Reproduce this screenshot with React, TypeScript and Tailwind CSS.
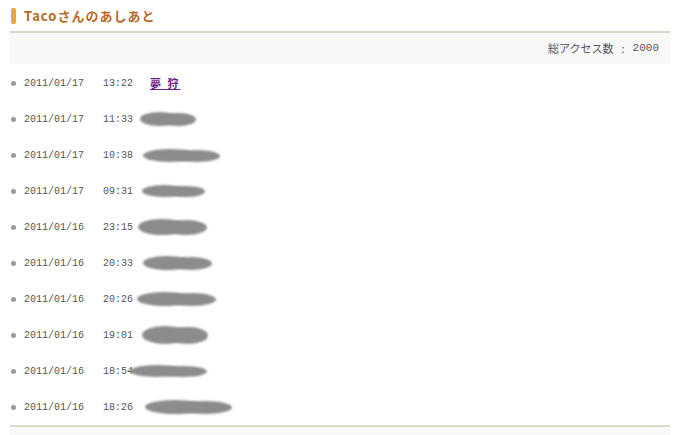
import React from "react";

const rows = [
  { date: "2011/01/17", time: "13:22", name: "夢 狩" },
  { date: "2011/01/17", time: "11:33", blob: { ml: -10, w: 56, h: 14 } },
  { date: "2011/01/17", time: "10:38", blob: { ml: -7, w: 77, h: 13 } },
  { date: "2011/01/17", time: "09:31", blob: { ml: -8, w: 63, h: 12 } },
  { date: "2011/01/16", time: "23:15", blob: { ml: -12, w: 69, h: 16 } },
  { date: "2011/01/16", time: "20:33", blob: { ml: -7, w: 69, h: 14 } },
  { date: "2011/01/16", time: "20:26", blob: { ml: -13, w: 79, h: 14 } },
  { date: "2011/01/16", time: "19:01", blob: { ml: -8, w: 66, h: 18 } },
  { date: "2011/01/16", time: "18:54", blob: { ml: -20, w: 77, h: 12 } },
  { date: "2011/01/16", time: "18:26", blob: { ml: -5, w: 87, h: 14 } },
];

export default function App() {
  return (
    <div className="w-[691px] h-[435px] bg-white overflow-hidden" style={{ fontFamily: '"Noto Sans CJK JP", sans-serif' }}>
      <div className="flex items-center h-[31px] pl-[11px]">
        <div className="w-[5px] h-[16px] rounded-[2px] bg-[#eba443]" />
        <h2 className="ml-[8px] text-[13px] font-bold text-[#b9692a] tracking-[1px] leading-none">Tacoさんのあしあと</h2>
      </div>
      <div className="mx-[10px] w-[660px] border-t-2 border-[#d8d6cb] bg-[#f8f8f8] h-[33px] flex items-center justify-end pr-[11px]">
        <span className="text-[11px] text-[#555] flex items-center">
          <span>総アクセス数</span>
          <span className="mx-[8px]">:</span>
          <span style={{ fontFamily: '"Liberation Mono", monospace' }}>2000</span>
        </span>
      </div>
      <ul className="mt-[1px]">
        {rows.map((r, i) => (
          <li key={i} className="h-[36px] flex items-center pl-[11px] text-[10px] text-[#555]" style={{ fontFamily: '"Liberation Mono", monospace' }}>
            <span className="w-[5px] h-[5px] rounded-full bg-[#9a9a9a]" />
            <span className="ml-[8px] w-[79px]">{r.date}</span>
            <span className="w-[47px]">{r.time}</span>
            {r.name ? (
              <a className="text-[11px] font-bold text-[#6b1e86] underline tracking-[2px]" style={{ fontFamily: '"Noto Sans CJK JP", sans-serif' }}>
                {r.name}
              </a>
            ) : (
              <span className="relative flex items-center" style={{ marginLeft: r.blob!.ml, width: r.blob!.w, height: r.blob!.h + 4 }}>
                <span className="absolute left-0 top-[2px] rounded-[50%] bg-[#8c8c8c] blur-[1px]" style={{ width: r.blob!.w * 0.7, height: r.blob!.h }} />
                <span className="absolute right-0 top-[3px] rounded-[50%] bg-[#8c8c8c] blur-[1px]" style={{ width: r.blob!.w * 0.6, height: r.blob!.h - 1 }} />
              </span>
            )}
          </li>
        ))}
      </ul>
      <div className="mx-[10px] w-[660px] border-t-2 border-[#dcdac8] bg-[#f8f8f8] h-[10px]" />
    </div>
  );
}
